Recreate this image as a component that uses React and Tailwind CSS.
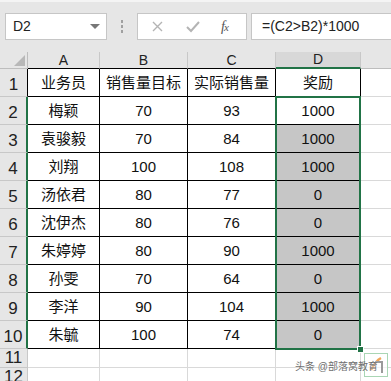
import React from 'react';

const ROWS = [
  ['业务员', '销售量目标', '实际销售量', '奖励'],
  ['梅颖', '70', '93', '1000'],
  ['袁骏毅', '70', '84', '1000'],
  ['刘翔', '100', '108', '1000'],
  ['汤依君', '80', '77', '0'],
  ['沈伊杰', '80', '76', '0'],
  ['朱婷婷', '80', '90', '1000'],
  ['孙雯', '70', '64', '0'],
  ['李洋', '90', '104', '1000'],
  ['朱毓', '100', '74', '0'],
];

const COLS = ['A', 'B', 'C', 'D'];
const WIDTHS = ['w-[72px]', 'w-[88px]', 'w-[88px]', 'w-[85px]'];
const FONT = "font-['Liberation_Sans','Noto_Sans_CJK_SC',sans-serif]";

function Toolbar() {
  return (
    <div className="h-[52px] bg-[#e6e6e6] border-t-2 border-[#f4f4f4] flex items-start pt-[11px] pl-[5px]">
      {/* name box */}
      <div className="w-[102px] h-[27px] bg-white border border-[#c6c6c6] flex items-center justify-between pl-[7px] pr-[6px]">
        <span className="text-[14px] text-[#222]">D2</span>
        <span className="w-0 h-0 border-l-[5px] border-r-[5px] border-t-[5px] border-l-transparent border-r-transparent border-t-[#777]" />
      </div>
      {/* grip */}
      <div className="w-[30px] h-[27px] flex flex-col items-center justify-center gap-[2px]">
        <span className="w-[2px] h-[3px] bg-[#a0a0a0]" />
        <span className="w-[2px] h-[3px] bg-[#a0a0a0]" />
        <span className="w-[2px] h-[3px] bg-[#a0a0a0]" />
      </div>
      {/* cancel / enter / fx */}
      <div className="w-[110px] h-[27px] bg-white border border-[#c6c6c6] flex items-center">
        <svg width="36" height="27" viewBox="0 0 36 27" className="shrink-0">
          <path d="M15 9 L24 18 M24 9 L15 18" stroke="#b4b4b4" strokeWidth="1.4" fill="none" />
        </svg>
        <svg width="36" height="27" viewBox="0 0 36 27" className="shrink-0">
          <path d="M13 14 L17 18 L25 9" stroke="#b4b4b4" strokeWidth="2" fill="none" />
        </svg>
        <span className="ml-[11px] text-[14px] italic text-[#555] font-['Liberation_Serif',serif] tracking-[-1px]">
          f<span className="text-[11px]">x</span>
        </span>
      </div>
      {/* formula */}
      <div className="ml-[4px] flex-1 h-[27px] bg-white border border-r-0 border-[#c6c6c6] flex items-center pl-[10px]">
        <span className="text-[14px] text-[#222]">=(C2&gt;B2)*1000</span>
      </div>
    </div>
  );
}

function HeaderRow() {
  return (
    <div className="flex h-[17px] bg-[#e6e6e6]">
      <div className="w-[28px] shrink-0 border-r border-b border-[#bdbdbd] relative">
        <svg width="11" height="11" viewBox="0 0 11 11" className="absolute right-[2px] bottom-[2px]">
          <path d="M11 0 L11 11 L0 11 Z" fill="#b8b8b8" />
        </svg>
      </div>
      {COLS.map((c, i) => (
        <div
          key={c}
          className={`${WIDTHS[i]} shrink-0 border-r border-[#c8c8c8] flex items-end justify-center text-[14px] leading-[16px] text-[#222] ${
            c === 'D' ? 'border-b-2 border-b-[#217346] bg-[#d8d8d8]' : 'border-b border-b-black'
          }`}
        >
          {c}
        </div>
      ))}
      <div className="flex-1 border-b border-[#bdbdbd]" />
    </div>
  );
}

function DataRow({ n, cells }) {
  const selected = n >= 2;
  return (
    <div className="flex h-[28px]">
      <div
        className={`w-[28px] shrink-0 bg-[#e6e6e6] border-b border-b-[#c8c8c8] flex items-end justify-center text-[17px] leading-[18px] text-[#222] pb-[2px] ${
          selected ? 'border-r-2 border-r-[#217346] bg-[#d8d8d8]' : 'border-r border-r-black'
        }`}
      >
        {n}
      </div>
      {cells.map((v, i) => (
        <div
          key={i}
          className={`${WIDTHS[i]} shrink-0 border-r border-b border-black flex items-center justify-center text-[15px] text-[#111] pt-[2px] ${
            i === 3 && n >= 3 ? 'bg-[#c6c6c6]' : 'bg-white'
          }`}
        >
          {v}
        </div>
      ))}
      <div className="flex-1 border-b border-[#d9d9d9] bg-white" />
    </div>
  );
}

function EmptyRow({ n }) {
  return (
    <div className="flex h-[19px]">
      <div className="w-[28px] shrink-0 bg-[#e6e6e6] border-r border-b border-[#c8c8c8] flex items-end justify-center text-[17px] leading-[18px] text-[#222]">
        {n}
      </div>
      {WIDTHS.map((w, i) => (
        <div key={i} className={`${w} shrink-0 border-r border-b border-[#d9d9d9] bg-white`} />
      ))}
      <div className="flex-1 border-b border-[#d9d9d9] bg-white" />
    </div>
  );
}

export default function App() {
  return (
    <div className={`w-[391px] h-[381px] overflow-hidden bg-white relative ${FONT}`}>
      <Toolbar />
      <div className="relative">
        <HeaderRow />
        {ROWS.map((r, i) => (
          <DataRow key={i} n={i + 1} cells={r} />
        ))}
        <EmptyRow n={11} />
        <EmptyRow n={12} />

        {/* selection D2:D10 */}
        <div className="absolute left-[275px] top-[44px] w-[86px] h-[254px] border-2 border-[#217346] pointer-events-none" />
        <div className="absolute left-[357px] top-[294px] w-[7px] h-[7px] bg-[#217346] border border-white" />
      </div>

      {/* watermark */}
      <div className="absolute left-[364px] top-[353px] w-[24px] h-[24px] border border-[#a9d6b4] bg-white/70">
        <svg width="22" height="22" viewBox="0 0 22 22" className="absolute left-0 top-0">
          <path d="M6 16 C9 10 12 6 16 4" stroke="#f0a65a" strokeWidth="2.5" fill="none" />
          <path d="M10 8 L17 8 L17 19" stroke="#9a9a9a" strokeWidth="2" fill="none" />
        </svg>
      </div>
      <span className="absolute left-[295px] top-[360px] text-[10px] leading-[13px] text-[#6f6f6f] [text-shadow:0_0_2px_#fff]">
        头条 @部落窝教育
      </span>
    </div>
  );
}
